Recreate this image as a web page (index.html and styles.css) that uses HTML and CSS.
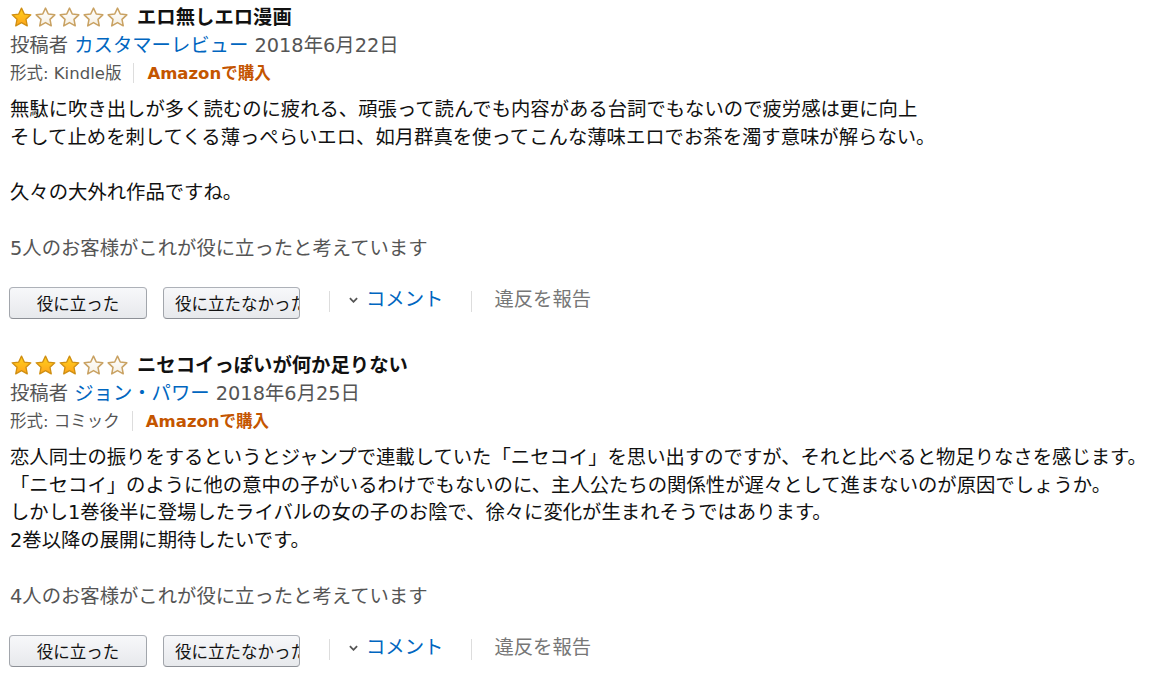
FILE: index.html
```html
<!DOCTYPE html>
<html lang="ja">
<head>
<meta charset="utf-8">
<title>レビュー</title>
<link rel="stylesheet" href="styles.css">
</head>
<body>
<svg class="defs" width="0" height="0" aria-hidden="true">
  <defs>
    <linearGradient id="gFull" x1="0" y1="0" x2="0" y2="1">
      <stop offset="0" stop-color="#ffd21a"/>
      <stop offset="1" stop-color="#ffa41c"/>
    </linearGradient>
    <linearGradient id="gEmpty" x1="0" y1="0" x2="0" y2="1">
      <stop offset="0" stop-color="#ffffff"/>
      <stop offset="1" stop-color="#f6f0e4"/>
    </linearGradient>
    <symbol id="starFull" viewBox="0 0 24 24">
      <path d="M12 2.2l2.9 6.2 6.8.8-5 4.7 1.3 6.8L12 17.3l-6 3.4 1.3-6.8-5-4.7 6.8-.8z" fill="url(#gFull)" stroke="#d08f12" stroke-width="1.4" stroke-linejoin="round"/>
    </symbol>
    <symbol id="starEmpty" viewBox="0 0 24 24">
      <path d="M12 2.2l2.9 6.2 6.8.8-5 4.7 1.3 6.8L12 17.3l-6 3.4 1.3-6.8-5-4.7 6.8-.8z" fill="url(#gEmpty)" stroke="#c9a263" stroke-width="1.6" stroke-linejoin="round"/>
    </symbol>
  </defs>
</svg>

<main class="reviews">
  <section class="review">
    <div class="review-title-row">
      <span class="stars">
        <svg class="star"><use href="#starFull"/></svg>
        <svg class="star"><use href="#starEmpty"/></svg>
        <svg class="star"><use href="#starEmpty"/></svg>
        <svg class="star"><use href="#starEmpty"/></svg>
        <svg class="star"><use href="#starEmpty"/></svg>
      </span>
      <span class="review-title">エロ無しエロ漫画</span>
    </div>
    <div class="byline">投稿者 <a class="author" href="#">カスタマーレビュー</a> 2018年6月22日</div>
    <div class="format">
      <span>形式: Kindle版</span>
      <span class="vsep"></span>
      <a class="buy" href="#">Amazonで購入</a>
    </div>
    <p class="review-body">無駄に吹き出しが多く読むのに疲れる、頑張って読んでも内容がある台詞でもないので疲労感は更に向上<br>そして止めを刺してくる薄っぺらいエロ、如月群真を使ってこんな薄味エロでお茶を濁す意味が解らない。<br><br>久々の大外れ作品ですね。</p>
    <div class="helpful">5人のお客様がこれが役に立ったと考えています</div>
    <div class="actions">
      <button class="vote-btn">役に立った</button>
      <button class="vote-btn vote-no">役に立たなかった</button>
      <span class="sep"></span>
      <a class="comment" href="#"><svg class="chev" viewBox="0 0 10 6"><path d="M1 1l4 4 4-4" fill="none" stroke="#555" stroke-width="2"/></svg>コメント</a>
      <span class="sep"></span>
      <a class="report" href="#">違反を報告</a>
    </div>
  </section>

  <section class="review">
    <div class="review-title-row">
      <span class="stars">
        <svg class="star"><use href="#starFull"/></svg>
        <svg class="star"><use href="#starFull"/></svg>
        <svg class="star"><use href="#starFull"/></svg>
        <svg class="star"><use href="#starEmpty"/></svg>
        <svg class="star"><use href="#starEmpty"/></svg>
      </span>
      <span class="review-title">ニセコイっぽいが何か足りない</span>
    </div>
    <div class="byline">投稿者 <a class="author" href="#">ジョン・パワー</a> 2018年6月25日</div>
    <div class="format">
      <span>形式: コミック</span>
      <span class="vsep"></span>
      <a class="buy" href="#">Amazonで購入</a>
    </div>
    <p class="review-body">恋人同士の振りをするというとジャンプで連載していた「ニセコイ」を思い出すのですが、それと比べると物足りなさを感じます。<br>「ニセコイ」のように他の意中の子がいるわけでもないのに、主人公たちの関係性が遅々として進まないのが原因でしょうか。<br>しかし1巻後半に登場したライバルの女の子のお陰で、徐々に変化が生まれそうではあります。<br>2巻以降の展開に期待したいです。</p>
    <div class="helpful">4人のお客様がこれが役に立ったと考えています</div>
    <div class="actions">
      <button class="vote-btn">役に立った</button>
      <button class="vote-btn vote-no">役に立たなかった</button>
      <span class="sep"></span>
      <a class="comment" href="#"><svg class="chev" viewBox="0 0 10 6"><path d="M1 1l4 4 4-4" fill="none" stroke="#555" stroke-width="2"/></svg>コメント</a>
      <span class="sep"></span>
      <a class="report" href="#">違反を報告</a>
    </div>
  </section>
</main>
</body>
</html>
```

FILE: styles.css
```css
html, body {
  margin: 0;
  padding: 0;
  background: #fff;
}

body {
  font-family: "DejaVu Sans", "Noto Sans CJK JP", sans-serif;
  font-size: 19.35px;
  line-height: 27.5px;
  color: #111;
}

.defs {
  position: absolute;
  width: 0;
  height: 0;
  overflow: hidden;
}

a {
  text-decoration: none;
}

.reviews {
  padding: 2px 0 0 10px;
}

.review {
  margin-bottom: 31px;
}

.review-title-row {
  display: flex;
  align-items: center;
  height: 30px;
}

.stars {
  display: flex;
  gap: 1px;
  margin-right: 8px;
}

.star {
  width: 23px;
  height: 23px;
  display: block;
}

.review-title {
  font-family: "Noto Sans CJK JP", sans-serif;
  font-weight: 700;
  color: #111;
}

.byline {
  color: #555;
}

.author {
  color: #0066c0;
}

.format {
  display: flex;
  align-items: center;
  height: 27.5px;
  font-size: 16.5px;
  color: #555;
}

.vsep {
  width: 1px;
  height: 20px;
  background: #ddd;
  margin: 0 13px 0 12px;
}

.buy {
  color: #c45500;
  font-weight: 700;
}

.review-body {
  margin: 9px 0 0 0;
  color: #111;
}

.helpful {
  margin-top: 29px;
  color: #555;
}

.actions {
  display: flex;
  align-items: center;
  margin-top: 24.5px;
  margin-left: -1px;
  height: 32px;
}

.vote-btn {
  box-sizing: border-box;
  width: 138px;
  height: 32px;
  padding: 0 11px;
  border: 1px solid #adb1b8;
  border-color: #adb1b8 #a2a6ac #8d9096;
  border-radius: 4px;
  background: linear-gradient(#f7f8fa, #e7e9ec);
  font-family: "Noto Sans CJK JP", sans-serif;
  font-size: 16.5px;
  color: #111;
  text-align: center;
  white-space: nowrap;
  overflow: hidden;
  margin-right: 16px;
  cursor: pointer;
}

.vote-no {
  width: 137px;
  text-align: left;
  margin-right: 29px;
}

.sep {
  width: 1px;
  height: 21px;
  background: #ddd;
  margin-bottom: 4px;
}

.comment {
  display: flex;
  align-items: center;
  color: #0066c0;
  margin: 0 28px 6px 19px;
}

.chev {
  width: 9px;
  height: 6px;
  margin-right: 8px;
}

.report {
  color: #777;
  margin: 0 0 6px 22px;
}
```
